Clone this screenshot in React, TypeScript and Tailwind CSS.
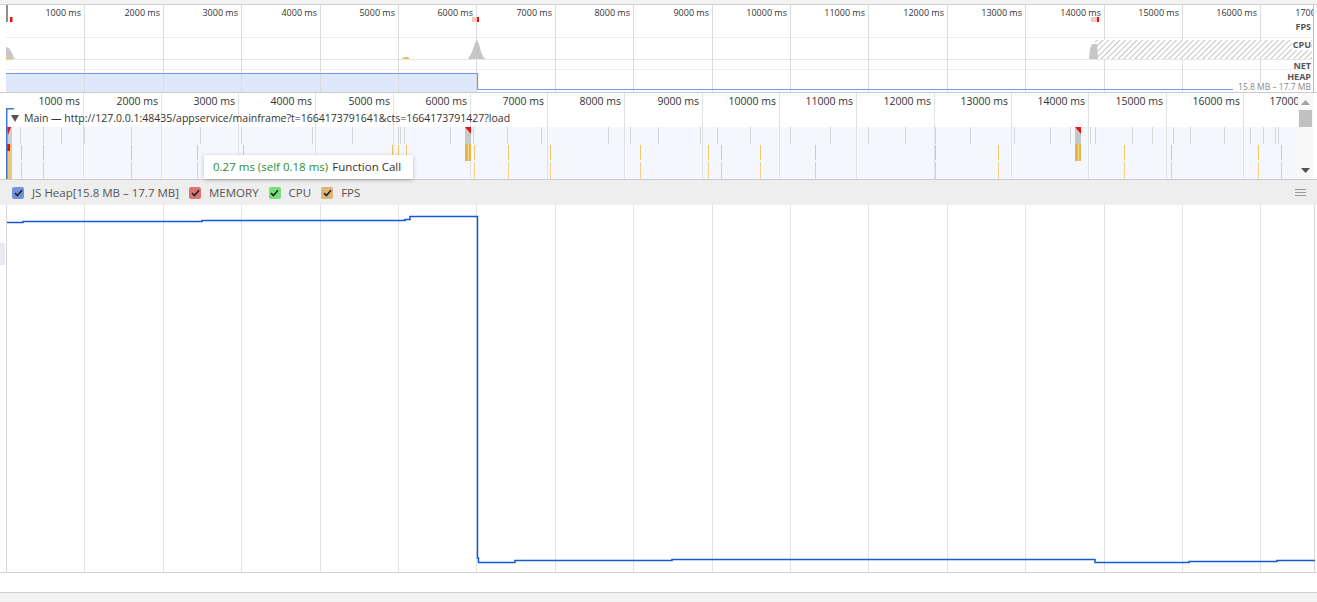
import React from "react";

const OV = 78.4; // overview tick spacing
const FL = 77.3; // flame ruler tick spacing
const ticks = Array.from({ length: 17 }, (_, i) => i + 1);

const grayMarks = [14, 37, 55, 78, 125, 194, 235, 306, 346, 392, 394, 398, 444, 467, 501, 535, 602, 624, 652, 694, 711, 744, 784, 824, 862, 899, 929, 964, 1008, 1044, 1064, 1084, 1089, 1126, 1146, 1167, 1184, 1218, 1244, 1257, 1269, 1272];
const yellowMarks = [15, 37, 125, 191, 237, 386, 392, 400, 468, 502, 544, 634, 702, 715, 754, 809, 929, 992, 1118, 1165, 1252, 1275];

function Check({ color }: { color: string }) {
  return (
    <span className="w-[12px] h-[12px] rounded-[2px] flex items-center justify-center" style={{ background: color }}>
      <svg width="9" height="8" viewBox="0 0 9 8">
        <path d="M1 4.2 L3.4 6.5 L8 1.3" stroke="#222" strokeWidth="1.6" fill="none" />
      </svg>
    </span>
  );
}

function Overview() {
  return (
    <div className="h-[88px] flex border-b border-[#cccccc]">
      <div className="w-[6px] shrink-0" />
      <div className="relative w-[1308px] h-[87px] overflow-hidden border-r border-[#bbbbbb]">
        <svg className="absolute left-0 top-0" width="1308" height="87">
          <line x1="0" y1="32.5" x2="1308" y2="32.5" stroke="#ececec" />
          <line x1="0" y1="54.5" x2="1308" y2="54.5" stroke="#e6e6e6" />
          <line x1="0" y1="64.5" x2="1308" y2="64.5" stroke="#ececec" />
          <rect x="0" y="68" width="471" height="19" fill="#dfe8fb" />
          {ticks.map((n) => (
            <line key={n} x1={Math.round(n * OV) + 0.5} y1="0" x2={Math.round(n * OV) + 0.5} y2="87" stroke="#dcdcdc" />
          ))}
          <defs>
            <pattern id="hatch" width="4" height="4" patternUnits="userSpaceOnUse" patternTransform="rotate(45)">
              <rect width="4" height="4" fill="#ffffff" />
              <line x1="0" y1="0" x2="0" y2="4" stroke="#c4c4c4" strokeWidth="2" />
            </pattern>
          </defs>
          <rect x="1089" y="35" width="217" height="19" fill="url(#hatch)" />
          <polygon points="0,42 3,43 6,48 8,53 10,54 0,54" fill="#c8c8c8" />
          <polygon points="462,54 465,49 467,44 469,38 471,35 473,39 475,47 478,53 480,54" fill="#c6c6c6" />
          <polygon points="1083,54 1084,44 1086,39 1091,39 1092,54" fill="#c6c6c6" />
          <polygon points="396,54 398,52 402,52 404,54" fill="#e8c15a" />
          <rect x="0" y="53" width="6" height="1.5" fill="#e8c15a" />
          <rect x="0" y="0" width="2" height="17" fill="#8f8f8f" />
          <rect x="4" y="12" width="2.5" height="5" fill="#ee1111" />
          <rect x="466" y="12" width="5" height="5" fill="#f6c4c4" />
          <rect x="471" y="12" width="2" height="5" fill="#ee1111" />
          <rect x="1085" y="12" width="6" height="5" fill="#f6c4c4" />
          <rect x="1091" y="12" width="2" height="5" fill="#ee1111" />
          <path d="M0 68.5 H471.5 V84.5 H1227" stroke="#6f9ce8" strokeWidth="1.2" fill="none" />
        </svg>
        {ticks.map((n) => (
          <div
            key={n}
            className="absolute top-[2px] text-[9px] leading-[12px] text-[#333] whitespace-nowrap text-right"
            style={{ left: Math.round(n * OV) - 63, width: 60 }}
          >
            {n}000 ms
          </div>
        ))}
        <span className="absolute right-[2px] top-[17px] text-[9px] leading-[10px] font-bold text-[#555] bg-white pl-[1px]">FPS</span>
        <span className="absolute right-[2px] top-[35px] text-[9px] leading-[10px] font-bold text-[#555] bg-white pl-[1px]">CPU</span>
        <span className="absolute right-[2px] top-[56px] text-[9px] leading-[9px] font-bold text-[#555]">NET</span>
        <span className="absolute right-[2px] top-[67px] text-[9px] leading-[9px] font-bold text-[#555]">HEAP</span>
        <span className="absolute right-[2px] top-[78px] text-[8.5px] leading-[8px] text-[#888] bg-white pl-[3px]">15.8 MB – 17.7 MB</span>
      </div>
    </div>
  );
}

function Flame() {
  return (
    <div className="h-[87px] flex border-b border-[#cccccc]">
      <div className="w-[6px] shrink-0" />
      <div className="relative w-[1292px] h-[86px] overflow-hidden">
        <div className="absolute left-0 right-0 top-[34px] bottom-0 bg-[#f4f7fd]" />
        <svg className="absolute left-0 top-0" width="1292" height="86">
          {ticks.map((n) => (
            <line key={n} x1={Math.round(n * FL) + 0.5} y1="0" x2={Math.round(n * FL) + 0.5} y2="86" stroke="#e2e2e2" />
          ))}
          {grayMarks.map((x, i) => (
            <line key={"g" + i} x1={x + 0.5} y1="34" x2={x + 0.5} y2="51" stroke="#d6d6d6" />
          ))}
          {yellowMarks.map((x, i) => (
            <g key={"y" + i}>
              <line x1={x + 0.5} y1="52" x2={x + 0.5} y2="67" stroke="#efc56a" />
              <line x1={x + 0.5} y1="69" x2={x + 0.5} y2="86" stroke="#f1d08a" />
            </g>
          ))}
          <rect x="1" y="34" width="5" height="17" fill="#cfcfcf" />
          <polygon points="1,34 5,34 2,42" fill="#ee1111" />
          <rect x="1" y="51" width="5" height="35" fill="#efc873" />
          <rect x="1" y="51" width="3" height="7" fill="#ee1111" />
          <rect x="459" y="34" width="6" height="17" fill="#c8c8c8" />
          <polygon points="459,34 465,34 465,41" fill="#ee1111" />
          <rect x="459" y="51" width="6" height="17" fill="#e6b548" />
          <rect x="462" y="51" width="1" height="17" fill="#f3d99a" />
          <rect x="1069" y="34" width="6" height="17" fill="#c8c8c8" />
          <polygon points="1069,34 1075,34 1075,41" fill="#ee1111" />
          <rect x="1069" y="51" width="6" height="17" fill="#e6b548" />
          <rect x="1072" y="51" width="1" height="17" fill="#f3d99a" />
          <path d="M0.75 86 V15.75 H8" stroke="#3a78d6" strokeWidth="1.5" fill="none" />
        </svg>
        {ticks.map((n) => (
          <div
            key={n}
            className="absolute top-[1px] text-[10.5px] leading-[14px] text-[#333] whitespace-nowrap text-right"
            style={{ left: Math.round(n * FL) - 63, width: 60 }}
          >
            {n}000 ms
          </div>
        ))}
        <div className="absolute left-[5px] top-[17px] h-[17px] flex items-center gap-[5px] text-[10.5px] text-[#333] whitespace-nowrap">
          <svg width="8" height="7" viewBox="0 0 8 7">
            <polygon points="0,0 8,0 4,7" fill="#555" />
          </svg>
          <span>Main — http://127.0.0.1:48435/appservice/mainframe?t=1664173791641&amp;cts=1664173791427?load</span>
        </div>
      </div>
      <div className="w-[15px] h-[86px] bg-[#f8f8f8] flex flex-col items-center">
        <svg className="mt-[7px]" width="9" height="5" viewBox="0 0 9 5">
          <polygon points="0,5 9,5 4.5,0" fill="#a3a3a3" />
        </svg>
        <div className="mt-[5px] w-[13px] h-[17px] bg-[#c1c1c1]" />
        <div className="flex-1" />
        <svg className="mb-[6px]" width="9" height="5" viewBox="0 0 9 5">
          <polygon points="0,0 9,0 4.5,5" fill="#505050" />
        </svg>
      </div>
    </div>
  );
}

function Legend() {
  const items = [
    { c: "#7194dd", t: "JS Heap[15.8 MB – 17.7 MB]" },
    { c: "#dd7474", t: "MEMORY" },
    { c: "#79dd79", t: "CPU" },
    { c: "#ddb576", t: "FPS" },
  ];
  return (
    <div className="h-[25px] bg-[#eeeeee] flex items-center pl-[12px] pr-[11px]">
      {items.map((it) => (
        <div key={it.t} className="flex items-center gap-[8px] mr-[10px]">
          <Check color={it.c} />
          <span className="text-[11.5px] text-[#555]">{it.t}</span>
        </div>
      ))}
      <div className="flex-1" />
      <div className="flex flex-col gap-[2px]">
        <span className="w-[11px] h-[1px] bg-[#9a9a9a]" />
        <span className="w-[11px] h-[1px] bg-[#9a9a9a]" />
        <span className="w-[11px] h-[1px] bg-[#9a9a9a]" />
      </div>
    </div>
  );
}

function Chart() {
  return (
    <div className="h-[368px] flex border-b border-[#d2d2d2]">
      <div className="w-[6px] shrink-0 flex flex-col">
        <div className="mt-[38px] h-[22px] w-[5px] bg-[#e7eaf3]" />
      </div>
      <div className="relative w-[1309px] h-[367px] border-l border-r border-[#d6d6d6]">
        <svg className="absolute left-0 top-0" width="1308" height="367">
          {ticks.map((n) => (
            <line key={n} x1={Math.round(n * OV) - 0.5} y1="0" x2={Math.round(n * OV) - 0.5} y2="367" stroke="#e3e3e3" />
          ))}
          <path
            d="M-1 17.5 H16 V16.5 H195 V15.5 H398 V14.5 H403 V11.5 H470.5 V353 H471.5 V357.5 H508 V355.5 H665 V354.5 H1088 V357.5 H1182 V356.5 H1270 V355.5 H1308"
            stroke="#1557d6"
            strokeWidth="1.5"
            fill="none"
          />
        </svg>
      </div>
    </div>
  );
}

export default function App() {
  return (
    <div
      className="relative w-[1317px] h-[602px] bg-white overflow-hidden flex flex-col"
      style={{ fontFamily: '"Open Sans", "Noto Sans", sans-serif' }}
    >
      <div className="h-[5px] bg-[#f3f3f3] border-b border-[#cfcfcf]" />
      <Overview />
      <Flame />
      <Legend />
      <Chart />
      <div className="h-[20px] border-b border-[#d2d2d2]" />
      <div className="flex-1 bg-[#f3f3f3]" />
      <div className="absolute left-[204px] top-[155px] w-[209px] h-[24px] bg-white shadow-[0_1px_4px_rgba(0,0,0,0.25)] flex items-center pl-[9px] gap-[4px] text-[11.5px] whitespace-nowrap">
        <span className="text-[#2e8f2e]">0.27 ms (self 0.18 ms)</span>
        <span className="text-[#333]">Function Call</span>
      </div>
    </div>
  );
}
